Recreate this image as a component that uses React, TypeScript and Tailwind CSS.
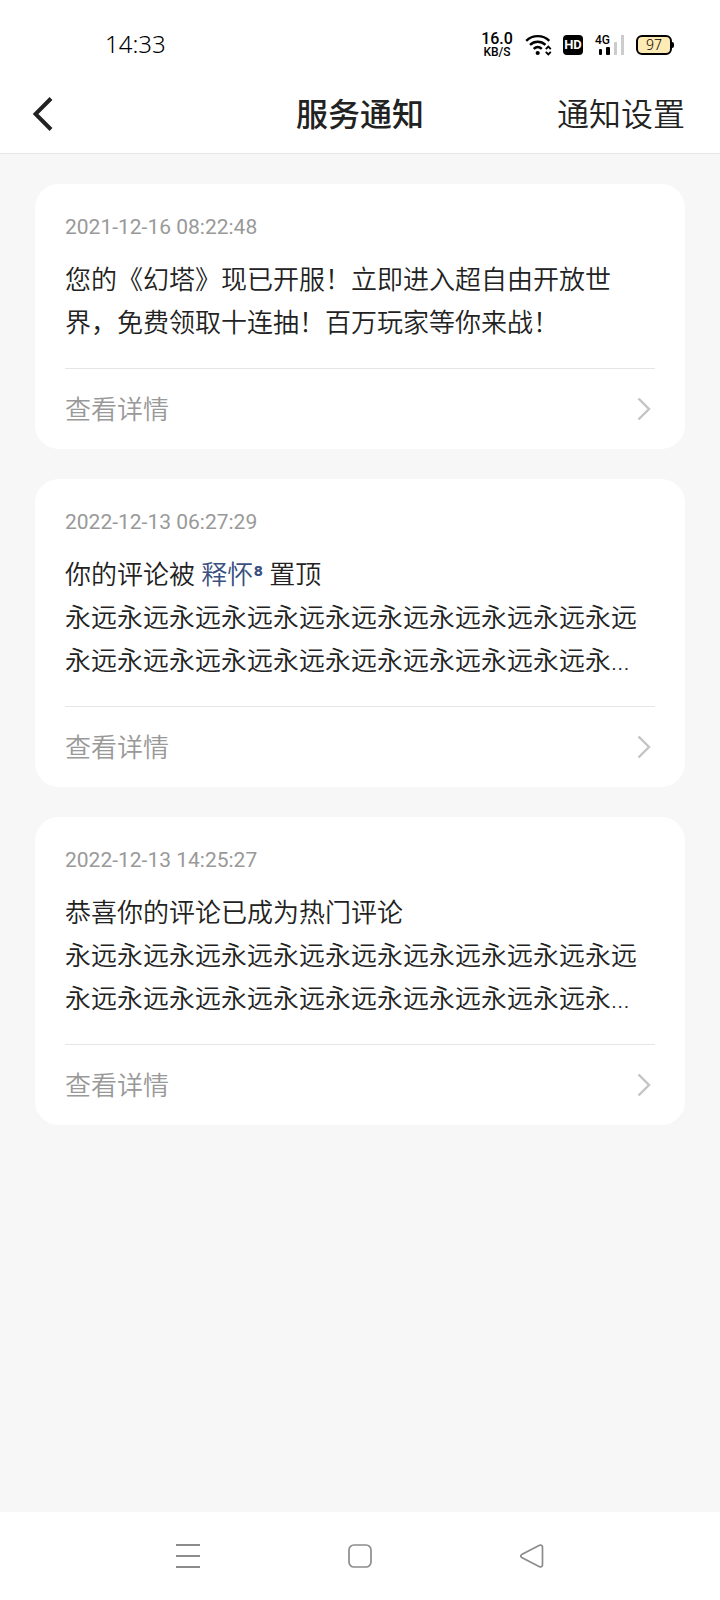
import { ReactNode } from "react";

type Notice = {
  id: number;
  time: string;
  title?: ReactNode;
  body: string;
};

const notices: Notice[] = [
  {
    id: 1,
    time: "2021-12-16 08:22:48",
    body: "您的《幻塔》现已开服！立即进入超自由开放世界，免费领取十连抽！百万玩家等你来战！",
  },
  {
    id: 2,
    time: "2022-12-13 06:27:29",
    title: (
      <>
        你的评论被{" "}
        <a href="#user" className="text-[#3a5080]">
          释怀<span className="font-medium">⁸</span>
        </a>{" "}
        置顶
      </>
    ),
    body: "永远".repeat(21) + "永...",
  },
  {
    id: 3,
    time: "2022-12-13 14:25:27",
    title: "恭喜你的评论已成为热门评论",
    body: "永远".repeat(21) + "永...",
  },
];

function StatusBar() {
  return (
    <div className="flex h-[76px] items-center justify-between pt-[14px] pr-[46px] pl-[105px] text-black">
      <span className="pb-[2px] font-['Noto_Sans',sans-serif] text-2xl leading-7 font-[350]">14:33</span>

      <div className="flex items-center">
        <div className="mr-3 flex w-8 flex-col items-center">
          <span className="text-base leading-[14px] font-medium">16.0</span>
          <span className="text-xs leading-3 font-medium">KB/S</span>
        </div>

        {/* Wifi with up/down arrows */}
        <svg width="28" height="22" viewBox="0 0 28 22" className="mr-[10px]" fill="none" stroke="#000">
          <path d="M1.200 6.800C7.500 .6 18 .6 24.300 6.800" strokeWidth="2.400" />
          <path d="M5 10.900C9.500 6.700 16 6.700 20.500 10.900" strokeWidth="2.400" />
          <path d="M8.700 14.900C11.200 12.500 14.300 12.500 16.800 14.900" strokeWidth="2.400" />
          <circle cx="12.700" cy="19" r="2.100" fill="#000" stroke="none" />
          <path d="M20.800 15.200l2.500-2.500 2.500 2.500M20.800 17.800l2.500 2.500 2.500-2.500" strokeWidth="1.900" />
        </svg>

        <span className="mr-3 flex size-5 items-center justify-center rounded bg-black text-[13px] leading-5 font-bold text-white">
          HD
        </span>

        {/* Signal */}
        <div className="relative mr-[11px] h-5 w-[30px]">
          <span className="absolute -top-px left-0 text-xs leading-3 font-medium">4G</span>
          <svg width="30" height="20" viewBox="0 0 30 20">
            <rect x="4" y="14" width="3" height="6" rx="1" fill="#000" />
            <rect x="11" y="12" width="4" height="8" rx="1" fill="#000" />
            <rect x="19" y="7" width="3" height="13" fill="#ccc" />
            <rect x="26" y="0" width="3" height="20" fill="#ccc" />
          </svg>
        </div>

        {/* Battery */}
        <div className="flex items-center">
          <span className="flex h-5 w-9 items-center justify-center rounded-md border-2 border-black bg-[#fdeab4] font-['Noto_Sans',sans-serif] text-sm leading-4 font-[350]">
            97
          </span>
          <span className="h-[6px] w-[2px] rounded-r-sm bg-black" />
        </div>
      </div>
    </div>
  );
}

function Header() {
  return (
    <header className="border-b border-[#e6e6e6] bg-white">
      <StatusBar />
      <div className="grid h-[77px] grid-cols-3 items-center px-[33px] text-[32px] leading-10 text-[#222]">
        <button aria-label="返回" className="justify-self-start">
          <svg width="20" height="36" viewBox="0 0 20 36" fill="none" stroke="#222" strokeWidth="4">
            <path d="M18 1.500L2.500 17L18 32.500" />
          </svg>
        </button>
        <h1 className="justify-self-center font-medium whitespace-nowrap">服务通知</h1>
        <button className="justify-self-end pr-[2px] font-[350] whitespace-nowrap">通知设置</button>
      </div>
    </header>
  );
}

function NoticeCard({ notice }: { notice: Notice }) {
  return (
    <article className="rounded-3xl bg-white px-[30px] pt-7">
      <time className="mb-[17px] block text-[21px] leading-[30px] text-[#999]">
        {notice.time}
      </time>
      <div className="pb-[23px] text-[26px] leading-[43px] font-[350] text-[#222]">
        {notice.title && <h2 className="font-[350]">{notice.title}</h2>}
        <p className="break-all">{notice.body}</p>
      </div>
      <a
        href="#detail"
        className="flex h-[81px] items-center justify-between border-t border-[#e6e6e6] pt-[2px] pr-1 text-[26px] font-[350] text-[#999]"
      >
        查看详情
        <svg width="14" height="24" viewBox="0 0 14 24" fill="none" stroke="#c4c4c4" strokeWidth="2.400">
          <path d="M1.500 .5L12 11L1.500 21.500" />
        </svg>
      </a>
    </article>
  );
}

function NavBar() {
  return (
    <nav className="flex h-[88px] items-center justify-between bg-white px-[176px]">
      <button aria-label="最近任务">
        <svg width="24" height="24" viewBox="0 0 24 24" stroke="#8c8c8c" strokeWidth="2">
          <path d="M0 1H24M0 12H24M0 23H24" />
        </svg>
      </button>
      <button aria-label="主页">
        <svg width="24" height="24" viewBox="0 0 24 24" fill="none" stroke="#8c8c8c" strokeWidth="1.700">
          <rect x="1" y="1" width="22" height="22" rx="5" />
        </svg>
      </button>
      <button aria-label="后退">
        <svg width="24" height="24" viewBox="0 0 24 24" fill="none" stroke="#8c8c8c" strokeWidth="1.700">
          <path d="M19.500 1.300L1.700 10.600Q-.3 12 1.700 13.400L19.500 22.700Q22.500 23.500 22.500 20.500V3.500Q22.500 .5 19.500 1.300Z" />
        </svg>
      </button>
    </nav>
  );
}

export default function App() {
  return (
    <div className="flex min-h-screen flex-col bg-[#f7f7f7] font-[Roboto,'Noto_Sans_CJK_SC',sans-serif]">
      <Header />
      <main className="flex flex-1 flex-col gap-[30px] px-[35px] py-[30px]">
        {notices.map((n) => (
          <NoticeCard key={n.id} notice={n} />
        ))}
      </main>
      <NavBar />
    </div>
  );
}
